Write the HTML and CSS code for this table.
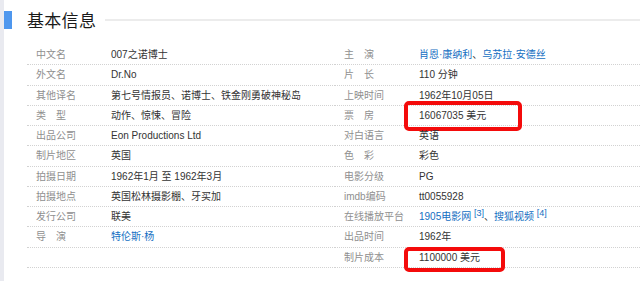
FILE: index.html
```html
<!DOCTYPE html>
<html lang="zh">
<head>
<meta charset="utf-8">
<link rel="stylesheet" href="styles.css">
</head>
<body>
<div class="page">
  <div class="strip"></div>
  <div class="main">
    <div class="head">
      <div class="bar"></div>
      <h2 class="title">基本信息</h2>
      <div class="rule"></div>
    </div>
    <div class="info">
      <dl class="col">
        <div class="row"><dt>中文名</dt><dd>007之诺博士</dd></div>
        <div class="row"><dt>外文名</dt><dd>Dr.No</dd></div>
        <div class="row"><dt>其他译名</dt><dd>第七号情报员、诺博士、铁金刚勇破神秘岛</dd></div>
        <div class="row"><dt class="two">类型</dt><dd>动作、惊悚、冒险</dd></div>
        <div class="row"><dt>出品公司</dt><dd>Eon Productions Ltd</dd></div>
        <div class="row"><dt>制片地区</dt><dd>英国</dd></div>
        <div class="row"><dt>拍摄日期</dt><dd>1962年1月 至 1962年3月</dd></div>
        <div class="row"><dt>拍摄地点</dt><dd>英国松林摄影棚、牙买加</dd></div>
        <div class="row"><dt>发行公司</dt><dd>联美</dd></div>
        <div class="row"><dt class="two">导演</dt><dd><a class="link">特伦斯·杨</a></dd></div>
        <div class="row"><dt></dt><dd></dd></div>
      </dl>
      <dl class="col">
        <div class="row"><dt class="two">主演</dt><dd><a class="link">肖恩·康纳利</a>、<a class="link">乌苏拉·安德丝</a></dd></div>
        <div class="row"><dt class="two">片长</dt><dd>110 分钟</dd></div>
        <div class="row"><dt>上映时间</dt><dd>1962年10月05日</dd></div>
        <div class="row"><dt class="two">票房</dt><dd>16067035 美元</dd><span class="mark mark-a"></span></div>
        <div class="row"><dt>对白语言</dt><dd>英语</dd></div>
        <div class="row"><dt class="two">色彩</dt><dd>彩色</dd></div>
        <div class="row"><dt>电影分级</dt><dd>PG</dd></div>
        <div class="row"><dt>imdb编码</dt><dd>tt0055928</dd></div>
        <div class="row"><dt>在线播放平台</dt><dd><a class="link">1905电影网</a> <sup class="ref">[3]</sup>、<a class="link">搜狐视频</a> <sup class="ref">[4]</sup></dd></div>
        <div class="row"><dt>出品时间</dt><dd>1962年</dd></div>
        <div class="row"><dt>制片成本</dt><dd>1100000 美元</dd><span class="mark mark-b"></span></div>
      </dl>
    </div>
  </div>
</div>
</body>
</html>
```
FILE: styles.css
```css
html, body {
  margin: 0;
  padding: 0;
  background: #fff;
}
body {
  font-family: "Liberation Sans", "Noto Sans CJK SC", sans-serif;
  width: 640px;
  height: 281px;
  overflow: hidden;
}
.page {
  display: flex;
  height: 281px;
}
.strip {
  width: 4px;
  background: #e9eaf0;
  flex: none;
}
.main {
  flex: 1;
  min-width: 0;
}
.head {
  display: flex;
  align-items: center;
  height: 40px;
}
.bar {
  width: 8px;
  height: 18px;
  background: #4e97ee;
  flex: none;
}
.title {
  margin: 0 0 0 15px;
  font-family: "Noto Sans CJK SC", sans-serif;
  font-size: 17px;
  font-weight: normal;
  color: #1a1a1a;
  letter-spacing: 0.3px;
  line-height: 20px;
}
.rule {
  flex: 1;
  height: 2px;
  background: #ececec;
  margin-left: 9px;
}
.info {
  display: grid;
  grid-template-columns: 308px 1fr;
  margin: 5px 0 0 23px;
}
.col {
  margin: 0;
}
.row {
  position: relative;
  display: flex;
  height: 19.25px;
  border-bottom: 1px dotted #d2d2d2;
  font-size: 10px;
  line-height: 19.25px;
}
dt {
  width: 75px;
  padding-left: 9px;
  color: #8f8f8f;
  flex: none;
  white-space: nowrap;
}
dt.two {
  letter-spacing: 10px;
}
dd {
  margin: 0;
  color: #333;
  white-space: nowrap;
}
.link {
  color: #136ec2;
  text-decoration: none;
}
.ref {
  color: #136ec2;
  font-size: 9px;
  line-height: 0;
  vertical-align: 4px;
}
.mark {
  position: absolute;
  left: 69px;
  border: 4px solid #f40b0b;
  border-radius: 5px;
  box-sizing: border-box;
}
.mark-a {
  top: -5px;
  height: 30px;
  width: 118px;
}
.mark-b {
  top: -1px;
  height: 25px;
  width: 101px;
}
```
